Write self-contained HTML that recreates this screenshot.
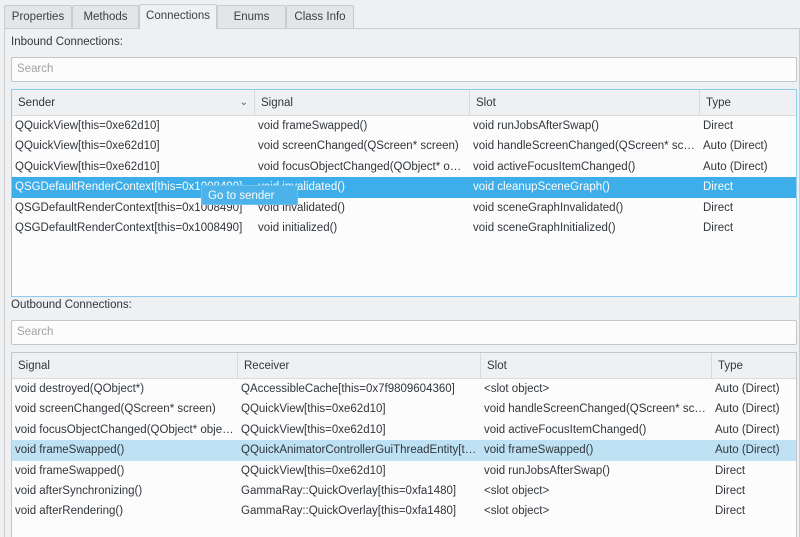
<!DOCTYPE html>
<html><head><meta charset="utf-8"><style>
*{margin:0;padding:0;box-sizing:border-box}
html,body{width:800px;height:537px;overflow:hidden}
body{background:#eff0f1;font-family:"Liberation Sans","DejaVu Sans",sans-serif;font-size:11.5px;color:#31363b;position:relative}
.a{position:absolute;white-space:nowrap;overflow:hidden}
.tab{position:absolute;top:5px;height:23px;border:1px solid #c9cbcd;border-bottom:none;background:#e3e5e7;text-align:center;line-height:22px;color:#3b4045;border-radius:2px 2px 0 0}
.tab.on{background:#eff0f1;top:4px;height:25px;z-index:2}
.panel{position:absolute;left:4px;top:28px;width:796px;height:509px;border:1px solid #c9cbcd;border-bottom:none;background:#eff0f1}
.search{position:absolute;left:11px;width:786px;height:25px;border:1px solid #c4c6c8;border-radius:2px;background:#fcfcfc;color:#a0a3a6;padding-left:5px;line-height:23px}
.tbl{position:absolute;left:11px;width:786px;background:#fcfcfc;border:1px solid #c4c6c8}
.hdr{position:absolute;left:0;top:0;height:26px;background:#eff0f1;border-bottom:1px solid #d8dadc;width:100%}
.hc{position:absolute;top:0;height:26px;line-height:26px;padding-left:6px;border-right:1px solid #d8dadc}
.row{position:absolute;left:0;width:100%;height:20.4px;line-height:21px}
.c{position:absolute;top:0;padding-left:3px;overflow:hidden;white-space:nowrap}
</style></head><body>
<div class="panel"></div>
<div class="tab" style="left:4px;width:68px">Properties</div>
<div class="tab" style="left:72px;width:67px">Methods</div>
<div class="tab on" style="left:139px;width:78px">Connections</div>
<div class="tab" style="left:217px;width:69px">Enums</div>
<div class="tab" style="left:286px;width:68px">Class Info</div>

<div class="a" style="left:11px;top:36px">Inbound Connections:</div>
<div class="search" style="top:57px">Search</div>
<div class="tbl" style="top:89px;height:208px;border-color:#8ccbee">
 <div class="hdr">
  <div class="hc" style="left:0;width:243px">Sender<span style="position:absolute;right:6px;font-size:10px;color:#555">&#8964;</span></div>
  <div class="hc" style="left:243px;width:215px">Signal</div>
  <div class="hc" style="left:458px;width:230px">Slot</div>
  <div class="hc" style="left:688px;width:98px;border:none">Type</div>
 </div>
 <div class="row" style="top:26px"><div class="c" style="left:0;width:243px">QQuickView[this=0xe62d10]</div><div class="c" style="left:243px;width:215px">void frameSwapped()</div><div class="c" style="left:458px;width:230px">void runJobsAfterSwap()</div><div class="c" style="left:688px">Direct</div></div>
 <div class="row" style="top:46.4px"><div class="c" style="left:0;width:243px">QQuickView[this=0xe62d10]</div><div class="c" style="left:243px;width:215px">void screenChanged(QScreen* screen)</div><div class="c" style="left:458px;width:230px">void handleScreenChanged(QScreen* sc…</div><div class="c" style="left:688px">Auto (Direct)</div></div>
 <div class="row" style="top:66.8px"><div class="c" style="left:0;width:243px">QQuickView[this=0xe62d10]</div><div class="c" style="left:243px;width:215px">void focusObjectChanged(QObject* o…</div><div class="c" style="left:458px;width:230px">void activeFocusItemChanged()</div><div class="c" style="left:688px">Auto (Direct)</div></div>
 <div class="row" style="top:87.2px;background:#3daee9;color:#fcfcfc"><div class="c" style="left:0;width:243px">QSGDefaultRenderContext[this=0x1008490]</div><div class="c" style="left:243px;width:215px">void invalidated()</div><div class="c" style="left:458px;width:230px">void cleanupSceneGraph()</div><div class="c" style="left:688px">Direct</div></div>
 <div class="row" style="top:107.6px"><div class="c" style="left:0;width:243px">QSGDefaultRenderContext[this=0x1008490]</div><div class="c" style="left:243px;width:215px">void invalidated()</div><div class="c" style="left:458px;width:230px">void sceneGraphInvalidated()</div><div class="c" style="left:688px">Direct</div></div>
 <div class="row" style="top:128px"><div class="c" style="left:0;width:243px">QSGDefaultRenderContext[this=0x1008490]</div><div class="c" style="left:243px;width:215px">void initialized()</div><div class="c" style="left:458px;width:230px">void sceneGraphInitialized()</div><div class="c" style="left:688px">Direct</div></div>
</div>
<div class="a" style="left:201px;top:185px;width:97px;height:20px;background:#4cb3ea;color:#fcfcfc;line-height:20px;padding-left:6px;border:1px solid #6fc0ec">Go to sender</div>

<div class="a" style="left:11px;top:299px">Outbound Connections:</div>
<div class="search" style="top:320px">Search</div>
<div class="tbl" style="top:352px;height:186px">
 <div class="hdr">
  <div class="hc" style="left:0;width:226px">Signal</div>
  <div class="hc" style="left:226px;width:243px">Receiver</div>
  <div class="hc" style="left:469px;width:231px">Slot</div>
  <div class="hc" style="left:700px;width:86px;border:none">Type</div>
 </div>
 <div class="row" style="top:26px"><div class="c" style="left:0;width:226px">void destroyed(QObject*)</div><div class="c" style="left:226px;width:243px">QAccessibleCache[this=0x7f9809604360]</div><div class="c" style="left:469px;width:231px">&lt;slot object&gt;</div><div class="c" style="left:700px">Auto (Direct)</div></div>
 <div class="row" style="top:46.4px"><div class="c" style="left:0;width:226px">void screenChanged(QScreen* screen)</div><div class="c" style="left:226px;width:243px">QQuickView[this=0xe62d10]</div><div class="c" style="left:469px;width:231px">void handleScreenChanged(QScreen* sc…</div><div class="c" style="left:700px">Auto (Direct)</div></div>
 <div class="row" style="top:66.8px"><div class="c" style="left:0;width:226px">void focusObjectChanged(QObject* obje…</div><div class="c" style="left:226px;width:243px">QQuickView[this=0xe62d10]</div><div class="c" style="left:469px;width:231px">void activeFocusItemChanged()</div><div class="c" style="left:700px">Auto (Direct)</div></div>
 <div class="row" style="top:87.2px;background:#bfe1f4"><div class="c" style="left:0;width:226px">void frameSwapped()</div><div class="c" style="left:226px;width:243px">QQuickAnimatorControllerGuiThreadEntity[t…</div><div class="c" style="left:469px;width:231px">void frameSwapped()</div><div class="c" style="left:700px">Auto (Direct)</div></div>
 <div class="row" style="top:107.6px"><div class="c" style="left:0;width:226px">void frameSwapped()</div><div class="c" style="left:226px;width:243px">QQuickView[this=0xe62d10]</div><div class="c" style="left:469px;width:231px">void runJobsAfterSwap()</div><div class="c" style="left:700px">Direct</div></div>
 <div class="row" style="top:128px"><div class="c" style="left:0;width:226px">void afterSynchronizing()</div><div class="c" style="left:226px;width:243px">GammaRay::QuickOverlay[this=0xfa1480]</div><div class="c" style="left:469px;width:231px">&lt;slot object&gt;</div><div class="c" style="left:700px">Direct</div></div>
 <div class="row" style="top:148.4px"><div class="c" style="left:0;width:226px">void afterRendering()</div><div class="c" style="left:226px;width:243px">GammaRay::QuickOverlay[this=0xfa1480]</div><div class="c" style="left:469px;width:231px">&lt;slot object&gt;</div><div class="c" style="left:700px">Direct</div></div>
</div>
</body></html>
